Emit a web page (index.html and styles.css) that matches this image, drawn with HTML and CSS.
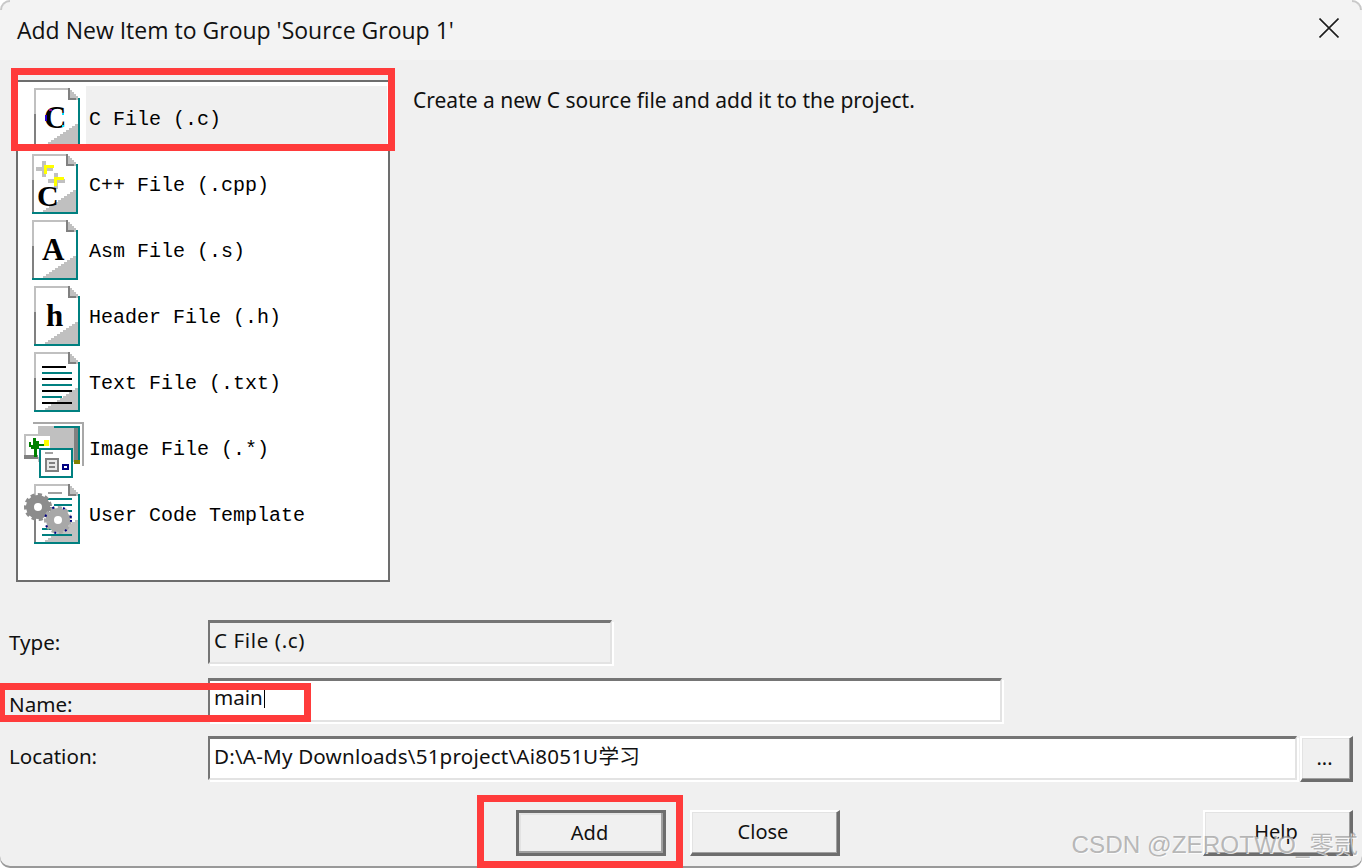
FILE: index.html
```html
<!DOCTYPE html>
<html lang="en">
<head>
    <meta charset="UTF-8">
    <meta name="viewport" content="width=device-width, initial-scale=1.0">
    <title>Add New Item to Group</title>
    <link rel="stylesheet" href="styles.css">
</head>
<body>
    <!-- Shared page shape for the file icons -->
    <svg class="icon-defs" aria-hidden="true">
        <symbol id="doc" viewBox="0 0 46 60" width="46" height="60" shape-rendering="crispEdges">
            <path d="M2 2H34L44 12V58H2Z" fill="#fff"/>
            <path d="M44 36h-3v2h-3v2h-3v2h-3v2h-3v2h-3v2h-3v2h-3v2h-3v2h-3v2h-3v2h33Z" fill="#c0c0c0"/>
            <rect x="0" y="0" width="34" height="2" fill="#c0c0c0"/>
            <rect x="0" y="0" width="2" height="26" fill="#c0c0c0"/>
            <rect x="0" y="26" width="2" height="34" fill="#808080"/>
            <path d="M34 0h2v2h2v2h2v2h2v2h2v2h2v2H34Z" fill="#c0c0c0"/>
            <rect x="34" y="0" width="2" height="10" fill="#808080"/>
            <rect x="34" y="10" width="8" height="2" fill="#808080"/>
            <rect x="44" y="10" width="2" height="50" fill="#008080"/>
            <rect x="0" y="58" width="46" height="2" fill="#008080"/>
        </symbol>
    </svg>

    <div class="dialog">
        <div class="titlebar">
            <span class="title">Add New Item to Group 'Source Group 1'</span>
            <svg class="close-icon" viewBox="0 0 20 20">
                <path d="M0.5 0.5L19.5 19.5M19.5 0.5L0.5 19.5" stroke="#1c1c1c" stroke-width="1.6" fill="none"/>
            </svg>
        </div>

        <div class="content">
            <div class="top-row">
                <div class="file-list">
                    <div class="file-item selected">
                        <svg class="item-icon" viewBox="0 0 60 60">
                            <use href="#doc" x="10"/>
                            <text x="20" y="40" class="icon-letter">C</text>
                            <g shape-rendering="crispEdges">
                                <rect x="21" y="27" width="2" height="6" fill="#2a00d0"/>
                                <rect x="25" y="21" width="3" height="2" fill="#90009a"/>
                                <rect x="38" y="25" width="2" height="2" fill="#00e0ff"/>
                                <rect x="38" y="37" width="2" height="2" fill="#00e0ff"/>
                            </g>
                        </svg>
                        <span class="item-label">C File (.c)</span>
                    </div>
                    <div class="file-item">
                        <svg class="item-icon" viewBox="0 0 60 60">
                            <use href="#doc" x="8"/>
                            <g shape-rendering="crispEdges">
                                <path d="M18 7h4v6h7v4h-7v6h-4v-6h-6v-4h6Z" fill="#c0c0c0"/>
                                <path d="M30 19h4v6h7v4h-7v6h-4v-6h-6v-4h6Z" fill="#c0c0c0"/>
                                <path d="M20 11h10v3h-7v6h-3Z" fill="#ffff00"/>
                                <path d="M30 23h10v3h-7v6h-3Z" fill="#ffff00"/>
                            </g>
                            <text x="13" y="52" class="icon-letter small">C</text>
                        </svg>
                        <span class="item-label">C++ File (.cpp)</span>
                    </div>
                    <div class="file-item">
                        <svg class="item-icon" viewBox="0 0 60 60">
                            <use href="#doc" x="8"/>
                            <text x="18" y="40" class="icon-letter">A</text>
                        </svg>
                        <span class="item-label">Asm File (.s)</span>
                    </div>
                    <div class="file-item">
                        <svg class="item-icon" viewBox="0 0 60 60">
                            <use href="#doc" x="10"/>
                            <text x="22" y="40" class="icon-letter">h</text>
                        </svg>
                        <span class="item-label">Header File (.h)</span>
                    </div>
                    <div class="file-item">
                        <svg class="item-icon" viewBox="0 0 60 60">
                            <use href="#doc" x="10"/>
                            <g shape-rendering="crispEdges">
                                <rect x="18" y="14" width="24" height="2" fill="#000"/>
                                <rect x="18" y="20" width="30" height="2" fill="#008080"/>
                                <rect x="18" y="26" width="30" height="2" fill="#000"/>
                                <rect x="18" y="32" width="30" height="2" fill="#008080"/>
                                <rect x="18" y="38" width="30" height="2" fill="#000"/>
                                <rect x="18" y="44" width="20" height="2" fill="#008080"/>
                                <rect x="18" y="50" width="30" height="2" fill="#000"/>
                            </g>
                        </svg>
                        <span class="item-label">Text File (.txt)</span>
                    </div>
                    <div class="file-item">
                        <svg class="item-icon" viewBox="0 0 60 60" shape-rendering="crispEdges">
                            <rect x="9" y="4" width="51" height="44" fill="#fff"/>
                            <rect x="9" y="4" width="51" height="2" fill="#a8a8a8"/>
                            <rect x="58" y="4" width="2" height="44" fill="#a8a8a8"/>
                            <rect x="14" y="8" width="42" height="36" fill="#c0c0c0"/>
                            <rect x="30" y="8" width="26" height="2" fill="#008080"/>
                            <rect x="54" y="8" width="2" height="36" fill="#008080"/>
                            <rect x="50" y="10" width="4" height="32" fill="#808080"/>
                            <rect x="50" y="42" width="6" height="4" fill="#808000"/>
                            <rect x="0" y="16" width="28" height="25" fill="#c0c0c0"/>
                            <rect x="2" y="18" width="24" height="21" fill="#fff"/>
                            <rect x="0" y="37" width="14" height="4" fill="#808080"/>
                            <path d="M9 20h3v3h3v3h5v2h-5v3h-2v8h-3V31H7v-2H5v-5h2v3h2Z" fill="#008000"/>
                            <rect x="20" y="22" width="5" height="6" fill="#ffff00"/>
                            <rect x="15" y="30" width="34" height="30" fill="#008080"/>
                            <rect x="17" y="32" width="30" height="26" fill="#fff"/>
                            <rect x="21" y="34" width="8" height="2" fill="#a0a0a0"/>
                            <rect x="21" y="40" width="14" height="14" fill="#808080"/>
                            <rect x="23" y="42" width="10" height="10" fill="#e8e8e8"/>
                            <rect x="25" y="44" width="6" height="2" fill="#808080"/>
                            <rect x="25" y="48" width="6" height="2" fill="#808080"/>
                            <rect x="38" y="46" width="7" height="6" fill="#000080"/>
                            <rect x="40" y="48" width="3" height="2" fill="#fff"/>
                        </svg>
                        <span class="item-label">Image File (.*)</span>
                    </div>
                    <div class="file-item">
                        <svg class="item-icon" viewBox="0 0 60 60">
                            <use href="#doc" x="10"/>
                            <g shape-rendering="crispEdges">
                                <rect x="24" y="8" width="14" height="2" fill="#a0a0a0"/>
                                <rect x="18" y="14" width="30" height="2" fill="#008080"/>
                                <rect x="30" y="20" width="18" height="2" fill="#008080"/>
                                <rect x="36" y="26" width="12" height="2" fill="#008080"/>
                                <rect x="40" y="32" width="8" height="2" fill="#008080"/>
                                <rect x="18" y="50" width="30" height="2" fill="#008080"/>
                                <rect x="18" y="44" width="10" height="2" fill="#008080"/>
                            </g>
                            <circle cx="14" cy="23" r="12" class="gear-teeth"/>
                            <circle cx="14" cy="23" r="8" class="gear-body"/>
                            <circle cx="34" cy="36" r="12" class="gear-teeth light"/>
                            <circle cx="34" cy="36" r="8" class="gear-body light"/>
                            <circle cx="34" cy="36" r="13" class="gear-dots"/>
                        </svg>
                        <span class="item-label">User Code Template</span>
                    </div>
                </div>
                <p class="description">Create a new C source file and add it to the project.</p>
            </div>

            <div class="form-row">
                <label class="form-label">Type:</label>
                <div class="field field-readonly type-field">C File (.c)</div>
            </div>
            <div class="form-row">
                <label class="form-label name-label">Name:</label>
                <div class="field name-field">main<span class="caret"></span></div>
            </div>
            <div class="form-row">
                <label class="form-label location-label">Location:</label>
                <div class="field location-field">D:\A-My Downloads\51project\Ai8051U学习</div>
                <button class="btn browse-btn">...</button>
            </div>

            <div class="buttons-row">
                <button class="btn btn-default">Add</button>
                <button class="btn">Close</button>
                <button class="btn help-btn">Help</button>
            </div>
        </div>
    </div>

    <!-- Annotations and watermark sitting on top of the dialog -->
    <div class="mark mark-item"></div>
    <div class="mark mark-name"></div>
    <div class="mark mark-add"></div>
    <div class="watermark">CSDN @ZEROTWO_零贰</div>
</body>
</html>
```

FILE: styles.css
```css
html, body {
    margin: 0;
    height: 100%;
    background-color: #fff;
    overflow: hidden;
}
body {
    position: relative;
    font-family: "Open Sans", "Noto Sans", "Noto Sans CJK SC", sans-serif;
    color: #000;
}
.icon-defs {
    display: none;
}
.dialog {
    box-sizing: border-box;
    height: 868px;
    background-color: #f0f0f0;
    border-radius: 10px;
    box-shadow: inset 0 -2px 0 #999;
    overflow: hidden;
}
/* window corner arcs at the top */
.dialog::before,
.dialog::after {
    content: "";
    position: absolute;
    top: 0;
    box-sizing: border-box;
    width: 10px;
    height: 10px;
    border-top: 2px solid #c8c8c8;
}
.dialog::before {
    left: 0;
    border-left: 2px solid #c8c8c8;
    border-top-left-radius: 10px;
}
.dialog::after {
    right: 0;
    border-right: 2px solid #c8c8c8;
    border-top-right-radius: 10px;
}
.titlebar {
    display: flex;
    justify-content: space-between;
    align-items: center;
    box-sizing: border-box;
    height: 60px;
    padding: 0 23px 4px 17px;
    background-color: #f3f3f3;
}
.title {
    margin-top: 4px;
    font-size: 23px;
    color: #111;
}
.close-icon {
    width: 20px;
    height: 20px;
}
.content {
    padding: 20px 9px 0 16px;
}
.top-row {
    display: flex;
    margin-bottom: 38px;
}
.file-list {
    box-sizing: border-box;
    width: 374px;
    height: 502px;
    padding-top: 2px;
    background-color: #fff;
    border: 2px solid #6d6d6d;
}
.file-item {
    display: flex;
    height: 66px;
    padding-left: 6px;
}
.item-icon {
    flex: none;
    width: 60px;
    height: 60px;
    margin-top: 4px;
}
.item-label {
    flex: 1;
    margin: 2px 1px 0 2px;
    padding-left: 3px;
    font-family: "Liberation Mono", monospace;
    font-size: 20px;
    line-height: 67px;
    white-space: pre;
}
.selected .item-label {
    height: 62px;
    background-color: #f0f0f0;
}
.icon-letter {
    font-family: "Liberation Serif", serif;
    font-weight: 700;
    font-size: 31px;
    fill: #000;
}
.icon-letter.small {
    font-size: 30px;
}
.gear-teeth {
    fill: none;
    stroke: #8c8c8c;
    stroke-width: 4;
    stroke-dasharray: 4 3;
}
.gear-teeth.light {
    stroke: #a8a8a8;
}
.gear-body {
    fill: #fff;
    stroke: #8c8c8c;
    stroke-width: 8;
}
.gear-body.light {
    stroke: #a8a8a8;
}
.gear-dots {
    fill: none;
    stroke: #000080;
    stroke-width: 2;
    stroke-dasharray: 2 9;
}
.description {
    margin: 8px 0 0 23px;
    font-family: "Noto Sans", sans-serif;
    font-size: 21px;
    line-height: 24px;
    color: #111;
}
.form-row {
    display: flex;
    align-items: flex-start;
    height: 45px;
    margin: 0 0 13px -7px;
    font-family: "Noto Sans", "Noto Sans CJK SC", sans-serif;
    font-size: 20.6px;
    color: #111;
}
.form-label {
    flex: none;
    width: 199px;
    padding-top: 8px;
    line-height: 28px;
}
.name-label {
    padding-top: 12px;
}
.location-label {
    padding-top: 6px;
}
.field {
    box-sizing: border-box;
    height: 44px;
    padding: 3px 4px 0;
    line-height: 28px;
    background-color: #fff;
    border-style: solid;
    border-width: 3px 2px 2px 2px;
    border-color: #757575 #e3e3e3 #e3e3e3 #757575;
    box-shadow: 2px 2px 0 #fff;
    white-space: nowrap;
}
.field-readonly {
    background-color: #f0f0f0;
}
.type-field {
    width: 404px;
    letter-spacing: 0.6px;
}
.name-field {
    width: 794px;
    padding-top: 2px;
}
.location-field {
    width: 1089px;
    padding-top: 3px;
    letter-spacing: 0.2px;
}
.caret {
    display: inline-block;
    width: 1px;
    height: 19px;
    margin-left: 1px;
    vertical-align: -3px;
    background-color: #000;
}
.btn {
    box-sizing: border-box;
    width: 150px;
    height: 46px;
    padding: 0 3px 2px 0;
    font-family: "Noto Sans", sans-serif;
    font-size: 20px;
    color: #111;
    background-color: #f0f0f0;
    border-style: solid;
    border-width: 2px 3px 3px 2px;
    border-color: #fff #6d6d6d #6d6d6d #fff;
    box-shadow: inset -1px -1px 0 #a0a0a0, inset 1px 1px 0 #e3e3e3;
}
.btn-default {
    border-width: 3px;
    border-color: #6d6d6d;
    box-shadow: inset -2px -2px 0 #a0a0a0, inset 2px 2px 0 #e3e3e3;
}
.browse-btn {
    width: 53px;
    margin-left: 3px;
}
.help-btn {
    margin-left: auto;
}
.buttons-row {
    display: flex;
    gap: 24px;
    margin-top: 29px;
    padding-left: 500px;
}
.mark {
    position: absolute;
    box-sizing: border-box;
    border: 7px solid #ff3b3b;
}
.mark-item {
    left: 11px;
    top: 68px;
    width: 384px;
    height: 83px;
}
.mark-name {
    left: -2px;
    top: 683px;
    width: 313px;
    height: 39px;
}
.mark-add {
    left: 477px;
    top: 795px;
    width: 206px;
    height: 73px;
}
.watermark {
    position: absolute;
    right: 4px;
    top: 825px;
    font-family: "Liberation Sans", "Noto Sans CJK SC", sans-serif;
    font-size: 24.3px;
    color: rgba(140, 140, 140, 0.6);
    text-shadow: 1px 1px 0 rgba(255, 255, 255, 0.8);
    white-space: nowrap;
}
```
